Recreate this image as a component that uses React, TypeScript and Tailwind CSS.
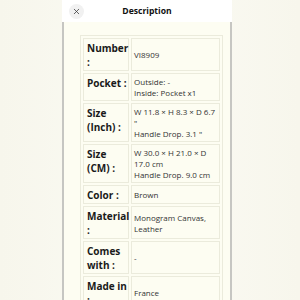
import { X } from 'lucide-react';

const rows: { label: string[]; value: string[] }[] = [
  { label: ['Number', ':'], value: ['VI8909'] },
  { label: ['Pocket :'], value: ['Outside: -', 'Inside: Pocket x1'] },
  { label: ['Size', '(Inch) :'], value: ['W 11.8 × H 8.3 × D 6.7 "', 'Handle Drop. 3.1 "'] },
  { label: ['Size', '(CM) :'], value: ['W 30.0 × H 21.0 × D 17.0 cm', 'Handle Drop. 9.0 cm'] },
  { label: ['Color :'], value: ['Brown'] },
  { label: ['Material', ':'], value: ['Monogram Canvas, Leather'] },
  { label: ['Comes', 'with :'], value: ['-'] },
  { label: ['Made in', ':'], value: ['France'] },
];

export default function App() {
  return (
    <div className="flex h-[300px] w-[300px] justify-center overflow-hidden bg-gradient-to-r from-[#f7f6ec] via-[#fbfbf4] to-[#f7f6ec] font-['Open_Sans',sans-serif]">
      <div className="ml-[-6px] flex w-[170px] shrink-0 flex-col">
        <header className="relative flex h-[22px] shrink-0 items-center justify-center bg-white">
          <span className="absolute left-[7px] top-[4px] grid h-[15px] w-[15px] place-items-center rounded-full bg-[#f1f1f1]">
            <X className="h-[9px] w-[9px] text-[#333]" strokeWidth={2} />
          </span>
          <span className="text-[8.6px] font-bold text-[#111]">Description</span>
        </header>

        <div className="flex-1 border-x-2 border-[#c6c6c2] bg-[#fdfdf2] pl-[16px] pt-[13px]">
          <div className="grid w-[143px] grid-cols-[46px_89px] gap-[2px] border border-[#ebebdc] p-[2px]">
            {rows.map((row, i) => (
              <div key={i} className="contents">
                <div className="whitespace-nowrap border border-[#ebebdc] pb-[1px] pl-[3px] pt-[2px] text-[10px] font-bold leading-[14px] text-[#1a1a1a]">
                  {row.label.map((l, j) => (
                    <div key={j}>{l}</div>
                  ))}
                </div>
                <div className="flex flex-col justify-center border border-[#ebebdc] px-[2px] py-[2px] text-[8px] leading-[11px] text-[#333]">
                  {row.value.map((v, j) => (
                    <div key={j}>{v}</div>
                  ))}
                </div>
              </div>
            ))}
          </div>
        </div>
      </div>
    </div>
  );
}
